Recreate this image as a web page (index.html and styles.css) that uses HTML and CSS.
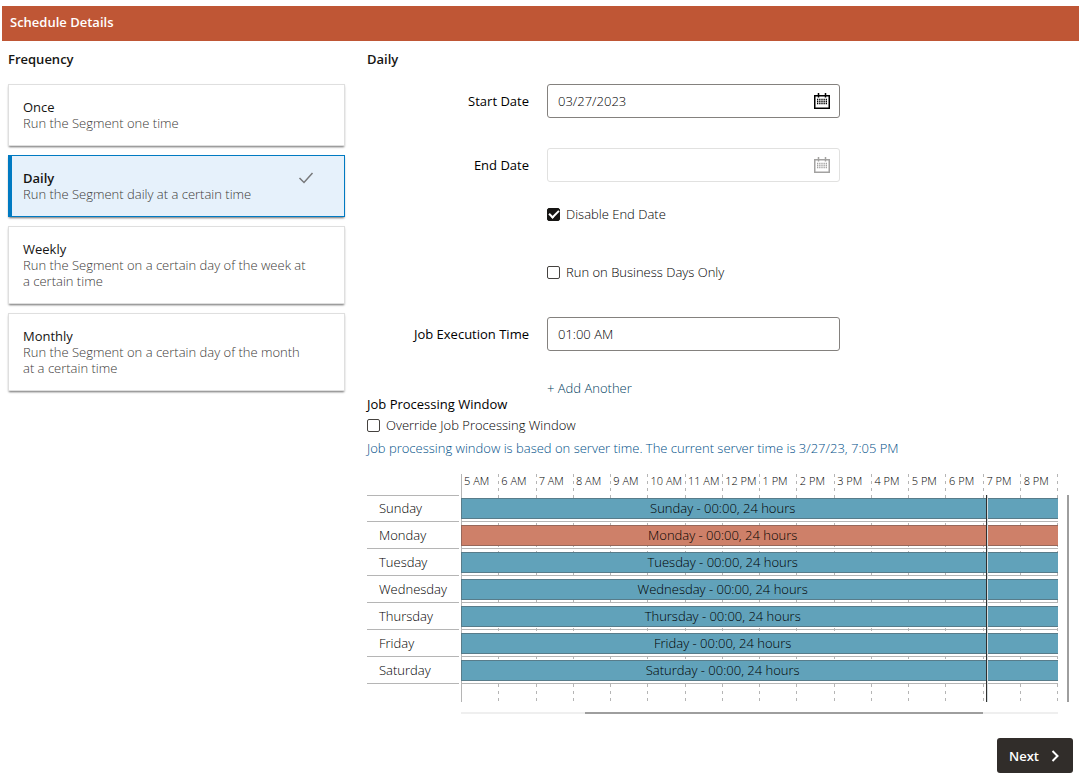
FILE: index.html
```html
<!DOCTYPE html>
<html lang="en">
<head>
<meta charset="utf-8">
<title>Schedule Details</title>
<link rel="stylesheet" href="styles.css">
</head>
<body>
<svg class="symbols" aria-hidden="true">
  <symbol id="calendar" viewBox="0 0 18 18">
    <path d="M1.750 3.500v12.750h14.500V3.500M1 3.750h16" fill="none" stroke="currentColor" stroke-width="1.500"/>
    <path d="M5.500 1v4.500M12.500 1v4.500" fill="none" stroke="currentColor" stroke-width="1.500"/>
    <path d="M4 7.500h10M4 9.500h10M4 11.500h10" fill="none" stroke="currentColor" stroke-width="1.300" stroke-dasharray="1.300 .870"/>
  </symbol>
</svg>
<header class="page-header"><h1>Schedule Details</h1></header>
<main class="layout">
  <fieldset class="frequency">
    <legend class="heading">Frequency</legend>
    <div class="cards">
      <label class="card"><input type="radio" name="frequency"><span class="card-title">Once</span><span class="card-text">Run the Segment one time</span></label>
      <label class="card"><input type="radio" name="frequency" checked><span class="card-title">Daily</span><span class="card-text">Run the Segment daily at a certain time</span>
        <svg class="card-check" viewBox="0 0 16 12" aria-hidden="true"><path d="M1.500 6l4.500 4.500L14.500 1" fill="none" stroke="currentColor" stroke-width="1.500"/></svg></label>
      <label class="card"><input type="radio" name="frequency"><span class="card-title">Weekly</span><span class="card-text">Run the Segment on a certain day of the week at a certain time</span></label>
      <label class="card"><input type="radio" name="frequency"><span class="card-title">Monthly</span><span class="card-text">Run the Segment on a certain day of the month at a certain time</span></label>
    </div>
  </fieldset>
  <section class="details">
    <h2 class="heading">Daily</h2>
    <form class="form">
      <div class="row">
        <label for="start">Start Date</label>
        <div class="field"><input id="start" type="text" value="03/27/2023"><button type="button" aria-label="Choose start date"><svg><use href="#calendar"/></svg></button></div>
      </div>
      <div class="row row-end">
        <label for="end">End Date</label>
        <div class="field field-disabled"><input id="end" type="text" disabled><button type="button" disabled aria-label="Choose end date"><svg><use href="#calendar"/></svg></button></div>
      </div>
      <div class="row row-check row-disable"><label class="check"><input type="checkbox" checked>Disable End Date</label></div>
      <div class="row row-check row-business"><label class="check"><input type="checkbox">Run on Business Days Only</label></div>
      <div class="row">
        <label for="time">Job Execution Time</label>
        <div class="field"><input id="time" type="text" value="01:00 AM"></div>
      </div>
      <div class="row row-check row-add"><a class="add" href="#">+ Add Another</a></div>
    </form>
    <section class="window">
      <h3>Job Processing Window</h3>
      <label class="check"><input type="checkbox">Override Job Processing Window</label>
      <p class="note">Job processing window is based on server time. The current server time is 3/27/23, 7:05 PM</p>
    </section>
    <div class="chart">
      <div class="chart-main">
        <div class="lines" aria-hidden="true"><i></i><i></i><i></i><i></i><i></i><i></i><i></i><i></i><i></i><i></i><i></i><i></i><i></i><i></i><i></i><i></i></div>
        <table class="schedule">
          <colgroup><col class="day-col"><col span="16"></colgroup>
          <thead><tr><td></td><th>5 AM</th><th>6 AM</th><th>7 AM</th><th>8 AM</th><th>9 AM</th><th>10 AM</th><th>11 AM</th><th>12 PM</th><th>1 PM</th><th>2 PM</th><th>3 PM</th><th>4 PM</th><th>5 PM</th><th>6 PM</th><th>7 PM</th><th>8 PM</th></tr></thead>
          <tbody>
            <tr><th><span>Sunday</span></th><td colspan="16"><div class="bar">Sunday - 00:00, 24 hours</div></td></tr>
            <tr><th><span>Monday</span></th><td colspan="16"><div class="bar bar-today">Monday - 00:00, 24 hours</div></td></tr>
            <tr><th><span>Tuesday</span></th><td colspan="16"><div class="bar">Tuesday - 00:00, 24 hours</div></td></tr>
            <tr><th><span>Wednesday</span></th><td colspan="16"><div class="bar">Wednesday - 00:00, 24 hours</div></td></tr>
            <tr><th><span>Thursday</span></th><td colspan="16"><div class="bar">Thursday - 00:00, 24 hours</div></td></tr>
            <tr><th><span>Friday</span></th><td colspan="16"><div class="bar">Friday - 00:00, 24 hours</div></td></tr>
            <tr><th><span>Saturday</span></th><td colspan="16"><div class="bar">Saturday - 00:00, 24 hours</div></td></tr>
          </tbody>
        </table>
        <div class="now-area" aria-hidden="true"><div class="now"></div></div>
      </div>
      <div class="vscroll"></div>
      <div class="hscroll"><div class="hscroll-thumb"></div></div>
    </div>
  </section>
</main>
<footer class="actions">
  <button type="button" class="next">Next<svg viewBox="0 0 8 12" aria-hidden="true"><path d="M1.500 1l5 5-5 5" fill="none" stroke="currentColor" stroke-width="2"/></svg></button>
</footer>
</body>
</html>
```
FILE: styles.css
```css
* { box-sizing: border-box; }
body {
  margin: 0;
  padding: 6px 0 0 2px;
  background: #fff;
  color: #000;
  font: 300 13px/16px "Open Sans", "Noto Sans", sans-serif;
}
h1, h2, h3, p, fieldset, legend { margin: 0; padding: 0; border: 0; font-size: inherit; }
input, button { font: inherit; color: inherit; }
.symbols { display: none; }
.page-header { padding: 8px 8px 11px; background: #bf5635; color: #fff; }
.page-header h1 { font-weight: 600; }
.layout { display: grid; grid-template-columns: 337px 1fr; column-gap: 22px; padding: 10px 10px 0 6px; }
.heading { height: 16px; color: #161513; font-weight: 600; }
.frequency { min-width: 0; }
.cards { display: flex; flex-direction: column; gap: 9px; padding-top: 17px; }
.card {
  position: relative;
  display: flex;
  flex-direction: column;
  padding: 14px 36px 14px 14px;
  border: 1px solid #dfdfdf;
  background: #fff;
  box-shadow: 0 2px 2px -1px rgba(0, 0, 0, .5), 0 1px 2px rgba(0, 0, 0, .1);
}
.card input { position: absolute; opacity: 0; }
.card-title { color: #161513; font-weight: 400; }
.card-text { color: #3c3a38; }
.card:has(:checked) { border-color: #007ac2; border-left-width: 4px; padding-left: 11px; background: #e6f1fb; }
.card:has(:checked) .card-title { font-weight: 600; }
.card-check { position: absolute; top: 16px; right: 30px; width: 16px; height: 12px; color: #77787a; }
.form { padding-top: 17px; }
.row { display: grid; grid-template-columns: 162px minmax(0, 293px); column-gap: 18px; align-items: center; margin-bottom: 30px; }
.row > label:first-child:not(.check) { text-align: right; font-weight: 400; }
.row-check > * { grid-column: 2; }
.row-end { margin-bottom: 24px; }
.row-disable { margin-bottom: 42px; }
.row-business { margin-bottom: 37px; }
.row-add { margin-bottom: 0; line-height: 15px; }
.field { display: flex; align-items: center; height: 34px; border: 1px solid #84817e; border-radius: 3px; }
.field input { flex: 1; min-width: 0; padding: 0 10px; border: 0; background: none; outline: 0; }
.field button { display: flex; padding: 0 8px; border: 0; background: none; }
.field svg { width: 18px; height: 18px; }
.field-disabled { border-color: #e1e1e0; }
.field-disabled button { color: #a3a2a1; }
.check { display: flex; align-items: center; gap: 6px; }
.check input {
  appearance: none;
  width: 13px;
  height: 13px;
  margin: 0;
  border: 1px solid #45423f;
  border-radius: 2px;
}
.check input:checked { display: grid; place-items: center; background: #161513; border-color: #161513; }
.check input:checked::before { content: ""; width: 8px; height: 4px; margin-bottom: 2px; border: solid #fff; border-width: 0 0 2px 2px; transform: rotate(-45deg); }
.add { color: #003e60; text-decoration: none; }
.window h3 { font-weight: 400; }
.window .check { margin-top: 5px; }
.note { margin-top: 7px; color: #004f88; }
.chart { display: grid; grid-template-columns: minmax(0, 1fr) 2px; column-gap: 9px; margin-top: 18px; }
.chart-main { position: relative; height: 228px; }
.lines, .now-area { position: absolute; top: 0; bottom: 0; left: 94px; right: 0; }
.lines { display: grid; grid-template-columns: repeat(16, 1fr); border-left: 1px solid #b5b5b5; }
.lines i { background: repeating-linear-gradient(#b5b5b5 0 3px, transparent 3px 7px) right / 1px 100% no-repeat; }
.now-area { top: 21px; }
.now { width: 2px; height: 100%; margin-left: 88%; background: #30302f; border-right: 1px solid #d5dde0; }
.schedule { position: relative; width: 100%; table-layout: fixed; border-collapse: separate; border-spacing: 0; }
.schedule th, .schedule td { padding: 0; font-weight: inherit; text-align: left; }
.day-col { width: 94px; }
.schedule thead th { height: 21px; padding: 0 0 7px 3px; font-size: 11px; line-height: 14px; white-space: nowrap; }
.schedule tbody th { height: 27px; }
.schedule tbody th span { display: block; height: 27px; margin-right: 2px; padding: 5px 0 0 12px; border-bottom: 1px solid #b5b5b5; }
.schedule tbody tr:first-child th span { padding-top: 4px; border-top: 1px solid #b5b5b5; }
.schedule tbody td { height: 27px; padding: 3px 0 2px; border-bottom: 1px solid #b5b5b5; }
.bar { height: 21px; padding-right: 12.5%; border: solid #587c8a; border-width: 1px 0 1px 1px; background: #61a2ba; line-height: 19px; text-align: center; }
.bar-today { border-color: #97685b; background: #ce8069; }
.vscroll { margin-top: 21px; background: #9e9e9e; }
.hscroll { height: 2px; margin: 10px 0 0 94px; background: #efefef; }
.hscroll-thumb { width: 66.6%; height: 100%; margin-left: 20.8%; background: #9e9e9e; }
.actions { display: flex; justify-content: flex-end; padding: 24px 6px 11px; }
.next { display: flex; align-items: center; gap: 12px; height: 35px; padding: 0 14px 0 12px; border: 0; border-radius: 3px; background: #312d2a; color: #fff; font-weight: 600; }
.next svg { width: 8px; height: 12px; }
```
